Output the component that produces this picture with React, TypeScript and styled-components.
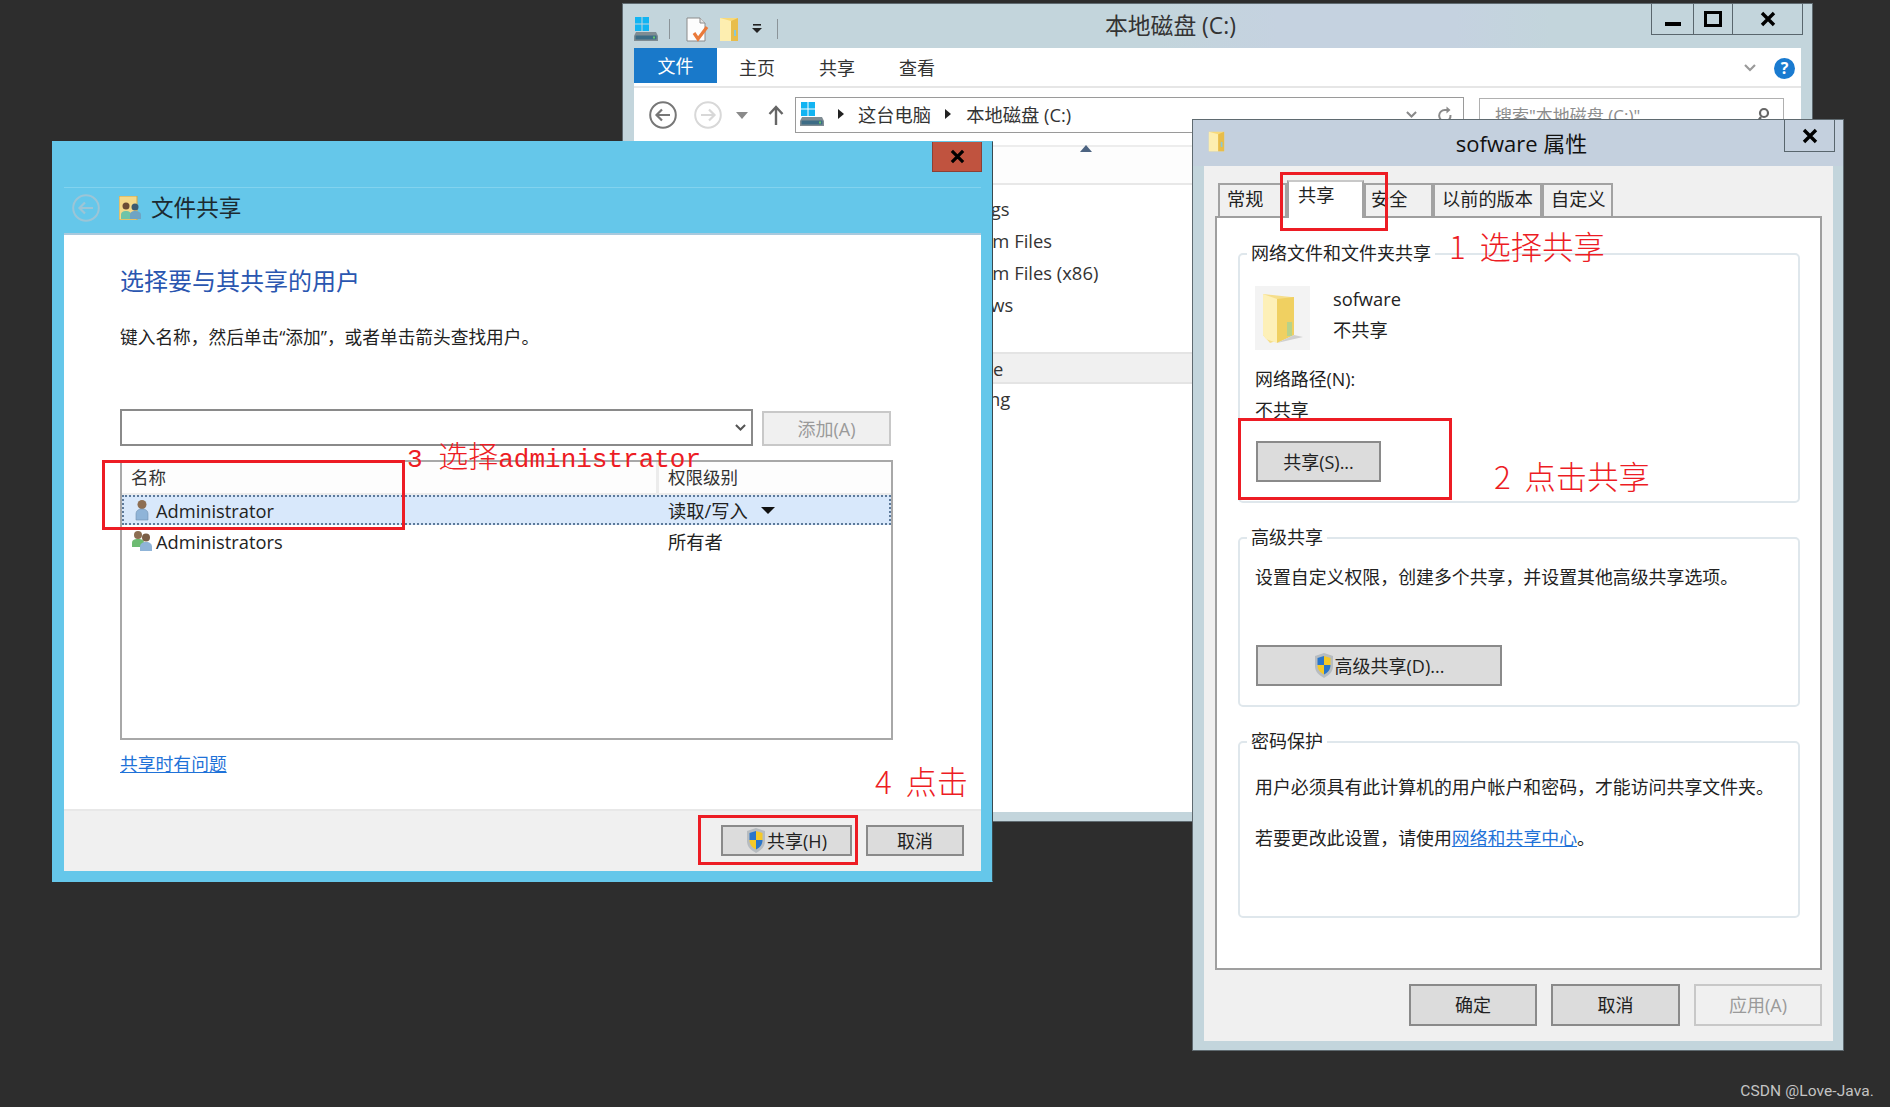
import React from "react";
import styled, { createGlobalStyle } from "styled-components";

const Global = createGlobalStyle`
  html, body { margin: 0; padding: 0; background: #2d2d2d; }
  * { box-sizing: border-box; }
  svg { flex: none; }
  body { font-family: "Open Sans", "Noto Sans CJK SC", sans-serif; color: #222; }
`;

const Desktop = styled.div`
  position: relative;
  width: 1890px;
  height: 1107px;
  background: #2d2d2d;
  overflow: hidden;
`;

const Watermark = styled.div`
  position: absolute;
  right: 16px;
  bottom: 6px;
  font-family: "Roboto", sans-serif;
  font-size: 15.5px;
  line-height: 20px;
  color: #c4c4c4;
  letter-spacing: 0.1px;
`;

const Frame = styled.section<{ $x: number; $y: number; $w: number; $h: number; $bg: string; $z: number }>`
  position: absolute;
  left: ${(p) => p.$x}px;
  top: ${(p) => p.$y}px;
  width: ${(p) => p.$w}px;
  height: ${(p) => p.$h}px;
  background: ${(p) => p.$bg};
  z-index: ${(p) => p.$z};
  border: 1px solid #5f6a70;
  display: flex;
  flex-direction: column;
`;
const ShareFrame = styled(Frame)`
  border-color: #65c7ea;
  border-right-color: #3a4a50;
  padding: 0 11px 10px;
`;

/* ---------- explorer ---------- */
const ExplorerTitleBar = styled.header`
  height: 44px;
  flex: none;
  display: flex;
  align-items: flex-start;
  padding: 0 9px 0 11px;
  background: linear-gradient(90deg, #c3d5dc 0 45%, #c5d2e0 55% 70%, #c3d5dc 78%);
`;
const Qat = styled.div`
  display: flex;
  align-items: center;
  height: 38px;
  margin-top: 6px;
  width: 144px;
  flex: none;
`;
const QatSep = styled.span<{ $ml: number }>`
  width: 1px;
  height: 20px;
  flex: none;
  background: #8b9499;
  margin-left: ${(p) => p.$ml}px;
`;
const QatSlot = styled.span<{ $ml: number }>`
  display: inline-flex;
  flex: none;
  margin-left: ${(p) => p.$ml}px;
`;
const ExplorerTitle = styled.h1`
  margin: 8px 0 0 327px;
  font-size: 22.8px;
  font-weight: 400;
  line-height: 28px;
  white-space: nowrap;
  color: #333;
`;
const CaptionGroup = styled.div`
  margin-left: auto;
  height: 31px;
  display: flex;
  border: 1px solid #59666d;
  border-top: none;
`;
const CaptionButton = styled.span<{ $w: number; $divider?: boolean }>`
  width: ${(p) => p.$w}px;
  display: flex;
  align-items: center;
  justify-content: center;
  border-left: ${(p) => (p.$divider ? "1px solid #59666d" : "none")};
`;

const ExplorerClient = styled.div`
  flex: 1;
  margin: 0 11px 9px;
  background: #fff;
  display: flex;
  flex-direction: column;
  min-height: 0;
`;
const Ribbon = styled.nav`
  height: 40px;
  flex: none;
  border-bottom: 2px solid #e6e6e6;
  display: flex;
  align-items: flex-start;
`;
const FileTab = styled.span`
  width: 83px;
  height: 35px;
  background: #1979ca;
  color: #fff;
  font-size: 18px;
  line-height: 36px;
  text-align: center;
`;
const RibbonTab = styled.span`
  width: 80px;
  height: 35px;
  font-size: 18px;
  line-height: 41px;
  text-align: center;
  color: #333;
`;
const RibbonRight = styled.span`
  margin-left: auto;
  display: flex;
  align-items: center;
  gap: 18px;
  height: 40px;
  padding-right: 6px;
`;
const HelpBadge = styled.span`
  width: 21px;
  height: 21px;
  border-radius: 50%;
  background: #1a7bd0;
  color: #fff;
  font-size: 16px;
  font-weight: 700;
  line-height: 21px;
  text-align: center;
`;
const NavRow = styled.div`
  height: 45px;
  flex: none;
  padding-top: 9px;
  display: flex;
  align-items: flex-start;
`;
const NavSlot = styled.span<{ $w: number; $ml: number }>`
  width: ${(p) => p.$w}px;
  height: 36px;
  margin-left: ${(p) => p.$ml}px;
  display: flex;
  align-items: center;
  justify-content: center;
`;
const AddressBar = styled.div`
  width: 669px;
  height: 36px;
  margin-left: 11px;
  border: 1.5px solid #9a9a9a;
  display: flex;
  align-items: center;
  padding: 0 0 2px 4px;
  font-size: 18.3px;
  color: #333;
`;
const Crumb = styled.span<{ $ml: number; $mr: number }>`
  white-space: nowrap;
  margin-left: ${(p) => p.$ml}px;
  margin-right: ${(p) => p.$mr}px;
`;
const CrumbArrow = styled.span<{ $ml?: number }>`
  width: 0;
  height: 0;
  flex: none;
  border-left: 6px solid #222;
  border-top: 5px solid transparent;
  border-bottom: 5px solid transparent;
  margin-left: ${(p) => p.$ml ?? 6}px;
`;
const AddressTools = styled.span`
  margin-left: auto;
  display: flex;
  align-items: center;
  gap: 20px;
  padding: 2px 10px 0 0;
`;
const SearchBox = styled.div`
  width: 305px;
  height: 36px;
  margin-left: 15px;
  margin-top: 1px;
  border: 1.5px solid #b0b0b0;
  display: flex;
  align-items: center;
  justify-content: space-between;
  padding: 0 13px 3px 15px;
  font-size: 17px;
  color: #8d8d8d;
`;
const FileHeader = styled.div`
  margin-top: 12px;
  height: 40px;
  flex: none;
  background: #fdfdfd;
  border-top: 2px solid #ededed;
  border-bottom: 2px solid #e8e8e8;
  display: flex;
  padding-left: 446px;
`;
const SortCaret = styled.span`
  width: 0;
  height: 0;
  margin-top: -2px;
  border-left: 6px solid transparent;
  border-right: 6px solid transparent;
  border-bottom: 7px solid #4d6482;
`;
const FileList = styled.ul`
  list-style: none;
  margin: 9px 0 0;
  padding: 0;
`;
const FileRow = styled.li<{ $selected?: boolean }>`
  height: 32px;
  line-height: 30px;
  padding-left: 301px;
  font-size: 18.4px;
  color: #333;
  background: ${(p) => (p.$selected ? "#f0f0f0" : "transparent")};
  border-top: ${(p) => (p.$selected ? "2px solid #e4e4e4" : "none")};
  border-bottom: ${(p) => (p.$selected ? "2px solid #e4e4e4" : "none")};
  margin-top: ${(p) => (p.$selected ? -2 : 0)}px;
`;

/* ---------- share dialog ---------- */
const ShareTop = styled.div`
  height: 45px;
  flex: none;
  display: flex;
  justify-content: flex-end;
  align-items: flex-start;
`;
const ShareClose = styled.span`
  width: 50px;
  height: 30px;
  margin-right: -1px;
  background: #c0533f;
  border: 1px solid #8c4036;
  border-top: none;
  display: flex;
  align-items: center;
  justify-content: center;
`;
const ShareHeader = styled.div`
  height: 48px;
  flex: none;
  border-top: 1px solid #82d3ef;
  border-bottom: 2px solid #a9c9dd;
  display: flex;
  align-items: center;
  padding: 0 0 6px 8px;
  gap: 9px;
`;
const ShareIconSlot = styled.span`
  display: inline-flex;
  margin-left: 10px;
`;
const ShareTitle = styled.h2`
  margin: 0;
  font-size: 22.6px;
  line-height: 28px;
  font-weight: 400;
  color: #1c2a30;
`;
const ShareBody = styled.div`
  flex: 1;
  background: #fff;
  padding: 29px 0 0 56px;
  display: flex;
  flex-direction: column;
  min-height: 0;
`;
const Heading = styled.h3`
  margin: 0;
  font-size: 24px;
  line-height: 34px;
  font-weight: 400;
  color: #2a56b0;
`;
const SubText = styled.p`
  margin: 26px 0 0;
  font-size: 17.7px;
  line-height: 26px;
  white-space: nowrap;
  color: #222;
`;
const ComboRow = styled.div`
  margin-top: 59px;
  display: flex;
  align-items: flex-end;
  gap: 9px;
`;
const Combo = styled.div`
  width: 633px;
  height: 37px;
  border: 2px solid #8a8a8a;
  display: flex;
  align-items: center;
  justify-content: flex-end;
  padding-right: 5px;
`;
const ListView = styled.div`
  margin-top: 14px;
  width: 773px;
  height: 280px;
  border: 2px solid #a8a8a8;
`;
const ListHeader = styled.div`
  height: 33px;
  display: grid;
  grid-template-columns: 537px 1fr;
  background: #fdfdfd;
  border-bottom: 2px solid #ececec;
  font-size: 17.5px;
  line-height: 30px;
`;
const HeaderCell = styled.span<{ $first?: boolean }>`
  padding-left: 9px;
  border-right: ${(p) => (p.$first ? "3px solid #ececec" : "none")};
  color: #333;
`;
const UserRow = styled.div<{ $selected?: boolean }>`
  height: 30px;
  display: grid;
  grid-template-columns: 537px 1fr;
  align-items: center;
  font-size: 18.3px;
  color: #222;
  background: ${(p) => (p.$selected ? "#d8e8fb" : "transparent")};
  outline: ${(p) => (p.$selected ? "2px dotted #5d7a9a" : "none")};
  outline-offset: -2px;
  margin-top: ${(p) => (p.$selected ? 0 : 1)}px;
`;
const UserName = styled.span`
  display: flex;
  align-items: center;
  padding-left: 6px;
`;
const UserIconSlot = styled.span`
  width: 28px;
  display: inline-flex;
  justify-content: center;
`;
const UserPerm = styled.span`
  display: flex;
  align-items: center;
  gap: 13px;
  padding-left: 9px;
`;
const MenuCaret = styled.span`
  width: 0;
  height: 0;
  border-top: 7px solid #111;
  border-left: 7px solid transparent;
  border-right: 7px solid transparent;
`;
const HelpLink = styled.a`
  margin-top: 12px;
  font-size: 17.8px;
  line-height: 24px;
  color: #1f72d8;
  text-decoration: underline;
  align-self: flex-start;
`;
const ShareFooter = styled.footer`
  height: 62px;
  flex: none;
  background: #f0f0f0;
  border-top: 2px solid #e8e8e8;
  padding: 14px 17px 0 0;
  display: flex;
  justify-content: flex-end;
  align-items: flex-start;
  gap: 14px;
`;

/* ---------- shared buttons ---------- */
const Button = styled.button<{ $w: number; $h: number; $disabled?: boolean }>`
  width: ${(p) => p.$w}px;
  height: ${(p) => p.$h}px;
  padding: 0;
  background: ${(p) => (p.$disabled ? "#f0f0f0" : "#dcdcdc")};
  border: 2px solid ${(p) => (p.$disabled ? "#c8c8c8" : "#8a8a8a")};
  color: ${(p) => (p.$disabled ? "#9a9a9a" : "#222")};
  font-family: inherit;
  font-size: 18px;
  line-height: 22px;
  display: inline-flex;
  align-items: center;
  justify-content: center;
  gap: 1px;
`;

/* ---------- properties ---------- */
const PropsTitleBar = styled.header`
  height: 46px;
  flex: none;
  display: grid;
  grid-template-columns: 1fr auto 1fr;
  margin: 0 -10px 0 -11px;
  padding: 0 8px 0 15px;
  background: #c4d0de;
`;
const PropsIconCell = styled.span`
  padding-top: 10px;
`;
const PropsTitle = styled.h2`
  margin: 10px 0 0;
  font-size: 22px;
  font-weight: 400;
  line-height: 27px;
  color: #111;
`;
const PropsClose = styled.span`
  justify-self: end;
  width: 51px;
  height: 32px;
  border: 1px solid #59666d;
  border-top: none;
  display: flex;
  align-items: center;
  justify-content: center;
`;
const PropsClient = styled.div`
  flex: 1;
  background: #f0f0f0;
  display: flex;
  flex-direction: column;
  padding: 0 11px;
  min-height: 0;
`;
const PropsWrap = styled.div`
  flex: 1;
  padding: 0 10px 9px 11px;
  display: flex;
  flex-direction: column;
  min-height: 0;
  background: #c3d5dc;
`;
const TabStrip = styled.div`
  height: 50px;
  flex: none;
  display: flex;
  align-items: flex-end;
  padding-left: 3px;
`;
const Tab = styled.span<{ $w: number; $pl: number; $active?: boolean }>`
  width: ${(p) => p.$w}px;
  height: ${(p) => (p.$active ? 38 : 33)}px;
  background: ${(p) => (p.$active ? "#fff" : "#f0f0f0")};
  border: 2px solid #a2a2a2;
  border-bottom: none;
  border-top-color: ${(p) => (p.$active ? "#c8c8c8" : "#a2a2a2")};
  font-size: 18.2px;
  line-height: ${(p) => (p.$active ? 27 : 29)}px;
  padding-left: ${(p) => p.$pl}px;
  color: #222;
  margin-bottom: ${(p) => (p.$active ? -2 : 0)}px;
  position: relative;
  z-index: ${(p) => (p.$active ? 1 : 0)};
  white-space: nowrap;
`;
const TabPanel = styled.div`
  height: 754px;
  flex: none;
  background: #fff;
  border: 2px solid #9f9f9f;
  padding: 35px 20px 0 21px;
  display: flex;
  flex-direction: column;
  gap: 34px;
`;
const Group = styled.div<{ $h: number }>`
  height: ${(p) => p.$h}px;
  flex: none;
  border: 2px solid #dfe7ec;
  border-radius: 5px;
  padding-left: 15px;
`;
const Legend = styled.span`
  display: block;
  width: fit-content;
  margin: -13px 0 0 -8px;
  padding: 0 4px;
  background: #fff;
  font-size: 18px;
  line-height: 22px;
  color: #222;
`;
const FolderRow = styled.div`
  margin-top: 22px;
  height: 64px;
  display: flex;
  gap: 23px;
`;
const FolderTile = styled.span`
  width: 55px;
  background: #f3f3f3;
  display: flex;
  align-items: center;
  justify-content: center;
`;
const FolderInfo = styled.div`
  display: flex;
  flex-direction: column;
  gap: 9px;
  padding-top: 2px;
  font-size: 18.3px;
  line-height: 22px;
`;
const PlainLine = styled.p<{ $mt: number }>`
  margin: ${(p) => p.$mt}px 0 0;
  font-size: 17.9px;
  line-height: 22px;
  white-space: nowrap;
  color: #222;
`;
const ButtonLine = styled.div<{ $mt: number }>`
  margin: ${(p) => p.$mt}px 0 0 1px;
`;
const InlineLink = styled.a`
  color: #1f72d8;
  text-decoration: underline;
`;
const PropsFooter = styled.footer`
  flex: 1;
  display: flex;
  justify-content: flex-end;
  gap: 14px;
  padding-top: 14px;
`;

/* ---------- annotations ---------- */
const RedBox = styled.div<{ $x: number; $y: number; $w: number; $h: number }>`
  position: absolute;
  z-index: 10;
  left: ${(p) => p.$x}px;
  top: ${(p) => p.$y}px;
  width: ${(p) => p.$w}px;
  height: ${(p) => p.$h}px;
  border: 3px solid #ed1c24;
`;
const Note = styled.div<{ $x: number; $y: number }>`
  position: absolute;
  z-index: 11;
  left: ${(p) => p.$x}px;
  top: ${(p) => p.$y}px;
  color: #ed1c24;
  font-family: "Noto Sans CJK SC", sans-serif;
  font-weight: 300;
  font-size: 31.3px;
  line-height: 40px;
  white-space: pre;
`;
const NoteMono = styled(Note)`
  font-family: "Liberation Mono", "Noto Sans CJK SC", monospace;
  font-size: 26px;
  font-weight: 400;
`;
const NoteCjk = styled.span`
  font-family: "Noto Sans CJK SC", sans-serif;
  font-weight: 300;
  font-size: 30px;
`;

/* ---------- drawings ---------- */
const DriveIcon = () => (
  <svg width="24" height="25" viewBox="0 0 24 25">
    <rect x="1" y="0" width="6.5" height="6.5" fill="#12b4f2" />
    <rect x="8.5" y="0" width="6.5" height="6.5" fill="#12b4f2" />
    <rect x="1" y="7.5" width="6.5" height="6.5" fill="#12b4f2" />
    <rect x="8.5" y="7.5" width="6.5" height="6.5" fill="#12b4f2" />
    <path d="M2 15h20l2 4v5H0v-5z" fill="#7f8c93" />
    <rect x="1.5" y="18.5" width="21" height="4" fill="#3d6c86" />
    <rect x="19" y="19.5" width="2" height="2" fill="#65c76a" />
  </svg>
);
const NoteIcon = () => (
  <svg width="24" height="25" viewBox="0 0 24 25">
    <path d="M1 1h13l5 5v18H1z" fill="#fdfdfd" stroke="#8b8b8b" />
    <path d="M14 1v5h5" fill="#e5e5e5" stroke="#8b8b8b" />
    <path d="M8 16l4 6 9-12" fill="none" stroke="#ea7a3a" strokeWidth="3.2" />
  </svg>
);
const SmallFolder = ({ w = 20, h = 25 }: { w?: number; h?: number }) => (
  <svg width={w} height={h} viewBox="0 0 20 25">
    <path d="M1 1h18v23H1z" fill="#f8d979" />
    <path d="M1 1l11 3v20H1z" fill="#fdeeb0" />
    <path d="M12 4l7-3v23h-7z" fill="#e8bd4b" />
    <rect x="15" y="13" width="2" height="6" fill="#87c8d8" />
  </svg>
);
const QatDrop = () => (
  <svg width="10" height="10" viewBox="0 0 10 10">
    <rect x="1" y="0" width="8" height="1.6" fill="#222" />
    <path d="M0 4h10L5 9z" fill="#222" />
  </svg>
);
const MinGlyph = () => (
  <svg width="16" height="16" viewBox="0 0 16 16">
    <rect x="0" y="11" width="16" height="4" fill="#000" />
  </svg>
);
const MaxGlyph = () => (
  <svg width="18" height="16" viewBox="0 0 18 16">
    <rect x="1.5" y="1.5" width="15" height="13" fill="none" stroke="#000" strokeWidth="3" />
  </svg>
);
const CloseGlyph = ({ s = 16, c = "#000" }: { s?: number; c?: string }) => (
  <svg width={s} height={s} viewBox="0 0 16 16">
    <path d="M2 2l12 12M14 2L2 14" stroke={c} strokeWidth="3.4" />
  </svg>
);
const BackCircle = ({ c, s = 28 }: { c: string; s?: number }) => (
  <svg width={s} height={s} viewBox="0 0 28 28">
    <circle cx="14" cy="14" r="12.8" fill="none" stroke={c} strokeWidth="2" />
    <path d="M21 14H8M13 8.5L7.5 14l5.5 5.5" fill="none" stroke={c} strokeWidth="2.2" />
  </svg>
);
const ForwardCircle = ({ c }: { c: string }) => (
  <svg width="28" height="28" viewBox="0 0 28 28">
    <circle cx="14" cy="14" r="12.8" fill="none" stroke={c} strokeWidth="2" />
    <path d="M7 14h13M15 8.5l5.5 5.5-5.5 5.5" fill="none" stroke={c} strokeWidth="2.2" />
  </svg>
);
const DownTri = () => (
  <svg width="12" height="7" viewBox="0 0 12 7">
    <path d="M0 0h12L6 7z" fill="#8a8a8a" />
  </svg>
);
const UpArrow = () => (
  <svg width="16" height="20" viewBox="0 0 16 20">
    <path d="M8 20V3M1.5 9L8 2l6.5 7" fill="none" stroke="#666" strokeWidth="2.4" />
  </svg>
);
const Chevron = ({ c = "#8a8a8a", w = 12 }: { c?: string; w?: number }) => (
  <svg width={w} height={(w * 8) / 12} viewBox="0 0 12 8">
    <path d="M1 1l5 5 5-5" fill="none" stroke={c} strokeWidth="2.2" />
  </svg>
);
const Refresh = () => (
  <svg width="16" height="18" viewBox="0 0 16 18">
    <path d="M13.5 9A5.7 5.7 0 1 1 8 4h3" fill="none" stroke="#8a8a8a" strokeWidth="2" />
    <path d="M9.5 0.5L13.5 4l-4 3.5z" fill="#8a8a8a" />
  </svg>
);
const Lens = () => (
  <svg width="14" height="16" viewBox="0 0 14 16">
    <circle cx="8" cy="6" r="4" fill="none" stroke="#666" strokeWidth="2.2" />
    <path d="M5 10l-3 4" stroke="#666" strokeWidth="2.4" />
  </svg>
);
const Shield = () => (
  <svg width="20" height="25" viewBox="0 0 20 25">
    <path d="M10 0l9 3v10c0 6-4 9-9 12-5-3-9-6-9-12V3z" fill="#b7bcc0" />
    <path d="M10 3v9H3.5V5z" fill="#2a75c9" />
    <path d="M10 3l6.5 2v7H10z" fill="#f5c927" />
    <path d="M3.5 12H10v9.5c-3.5-2-6.5-4.5-6.5-9.5z" fill="#f5c927" />
    <path d="M10 12h6.5c0 5-3 7.5-6.5 9.5z" fill="#2a75c9" />
  </svg>
);
const UserIcon = () => (
  <svg width="18" height="22" viewBox="0 0 18 22">
    <circle cx="9" cy="5.5" r="4.5" fill="#8d6e52" />
    <path d="M3 21v-6c0-3 2-5 6-5s6 2 6 5v6z" fill="#8fb4d8" stroke="#6f8fae" strokeWidth=".6" />
  </svg>
);
const UsersIcon = () => (
  <svg width="22" height="22" viewBox="0 0 22 22">
    <circle cx="7" cy="5" r="4" fill="#8d6e52" />
    <path d="M1 17v-4c0-3 2-4 6-4s6 1 6 4v4z" fill="#6dbb72" />
    <circle cx="15" cy="7.5" r="4" fill="#7a5e46" />
    <path d="M9 21v-4c0-3 2-5 6-5s6 2 6 5v4z" fill="#8fb4d8" />
  </svg>
);
const ShareUsersIcon = () => (
  <svg width="23" height="24" viewBox="0 0 23 24">
    <path d="M0 0h18v24H0z" fill="#f4d98a" stroke="#cfa84a" />
    <circle cx="7" cy="10" r="3.5" fill="#6b4d35" />
    <path d="M2 23v-4c0-3 2-4 5-4s5 1 5 4v4z" fill="#6fc4a8" />
    <circle cx="16" cy="11" r="3.5" fill="#3d5a70" />
    <path d="M11 23v-4c0-3 2-4 5-4s6 1 6 4v4z" fill="#6fa4c4" />
  </svg>
);
const BigFolder = () => (
  <svg width="42" height="54" viewBox="0 0 42 54">
    <path d="M1 3l28 3 3 0v38L8 52 1 44z" fill="#f6de8a" />
    <path d="M1 3l14 5v44L4 48 1 44z" fill="#fdf0b8" />
    <path d="M15 8l17-2v38L15 52z" fill="#f0d061" />
    <rect x="25" y="31" width="5" height="14" fill="#b7d28a" />
    <path d="M32 44l9 2-26 6z" fill="#cfcfcf" />
  </svg>
);

export default function App() {
  return (
    <>
      <Global />
      <Desktop>
        <Frame $x={622} $y={3} $w={1191} $h={819} $bg="#c3d5dc" $z={1}>
          <ExplorerTitleBar>
            <Qat>
              <DriveIcon />
              <QatSep $ml={11} />
              <QatSlot $ml={16}><NoteIcon /></QatSlot>
              <QatSlot $ml={9}><SmallFolder /></QatSlot>
              <QatSlot $ml={13}><QatDrop /></QatSlot>
              <QatSep $ml={15} />
            </Qat>
            <ExplorerTitle>本地磁盘 (C:)</ExplorerTitle>
            <CaptionGroup>
              <CaptionButton $w={41}><MinGlyph /></CaptionButton>
              <CaptionButton $w={39} $divider><MaxGlyph /></CaptionButton>
              <CaptionButton $w={70} $divider><CloseGlyph /></CaptionButton>
            </CaptionGroup>
          </ExplorerTitleBar>
          <ExplorerClient>
            <Ribbon>
              <FileTab>文件</FileTab>
              <RibbonTab>主页</RibbonTab>
              <RibbonTab>共享</RibbonTab>
              <RibbonTab>查看</RibbonTab>
              <RibbonRight>
                <Chevron c="#9a9a9a" w={12} />
                <HelpBadge>?</HelpBadge>
              </RibbonRight>
            </Ribbon>
            <NavRow>
              <NavSlot $w={28} $ml={15}><BackCircle c="#777" /></NavSlot>
              <NavSlot $w={28} $ml={17}><ForwardCircle c="#d8d8d8" /></NavSlot>
              <NavSlot $w={12} $ml={14}><DownTri /></NavSlot>
              <NavSlot $w={16} $ml={20}><UpArrow /></NavSlot>
              <AddressBar>
                <DriveIcon />
                <CrumbArrow $ml={14} />
                <Crumb $ml={14} $mr={14}>这台电脑</Crumb>
                <CrumbArrow $ml={0} />
                <Crumb $ml={15} $mr={12}>本地磁盘 (C:)</Crumb>
                <AddressTools>
                  <Chevron w={11} />
                  <Refresh />
                </AddressTools>
              </AddressBar>
              <SearchBox>
                <span>搜索"本地磁盘 (C:)"</span>
                <Lens />
              </SearchBox>
            </NavRow>
            <FileHeader>
              <SortCaret />
            </FileHeader>
            <FileList>
              <FileRow>PerfLogs</FileRow>
              <FileRow>Program Files</FileRow>
              <FileRow>Program Files (x86)</FileRow>
              <FileRow>Windows</FileRow>
              <FileRow aria-hidden />
              <FileRow $selected>sofware</FileRow>
              <FileRow>Mapping</FileRow>
            </FileList>
          </ExplorerClient>
        </Frame>

        <ShareFrame $x={52} $y={141} $w={941} $h={741} $bg="#65c7ea" $z={2}>
          <ShareTop>
            <ShareClose><CloseGlyph s={15} /></ShareClose>
          </ShareTop>
          <ShareHeader>
            <BackCircle c="#9cc5d6" />
            <ShareIconSlot><ShareUsersIcon /></ShareIconSlot>
            <ShareTitle>文件共享</ShareTitle>
          </ShareHeader>
          <ShareBody>
            <Heading>选择要与其共享的用户</Heading>
            <SubText>键入名称，然后单击“添加”，或者单击箭头查找用户。</SubText>
            <ComboRow>
              <Combo><Chevron c="#555" w={11} /></Combo>
              <Button $w={129} $h={35} $disabled>添加(A)</Button>
            </ComboRow>
            <ListView>
              <ListHeader>
                <HeaderCell $first>名称</HeaderCell>
                <HeaderCell>权限级别</HeaderCell>
              </ListHeader>
              <UserRow $selected>
                <UserName><UserIconSlot><UserIcon /></UserIconSlot>Administrator</UserName>
                <UserPerm>读取/写入<MenuCaret /></UserPerm>
              </UserRow>
              <UserRow>
                <UserName><UserIconSlot><UsersIcon /></UserIconSlot>Administrators</UserName>
                <UserPerm>所有者</UserPerm>
              </UserRow>
            </ListView>
            <HelpLink>共享时有问题</HelpLink>
          </ShareBody>
          <ShareFooter>
            <Button $w={131} $h={31}><Shield />共享(H)</Button>
            <Button $w={98} $h={31}>取消</Button>
          </ShareFooter>
        </ShareFrame>

        <Frame $x={1192} $y={119} $w={652} $h={932} $bg="#c3d5dc" $z={3}>
          <PropsWrap>
            <PropsTitleBar>
              <PropsIconCell><SmallFolder w={17} h={23} /></PropsIconCell>
              <PropsTitle>sofware 属性</PropsTitle>
              <PropsClose><CloseGlyph /></PropsClose>
            </PropsTitleBar>
            <PropsClient>
              <TabStrip>
                <Tab $w={69} $pl={7}>常规</Tab>
                <Tab $w={77} $pl={9} $active>共享</Tab>
                <Tab $w={69} $pl={5}>安全</Tab>
                <Tab $w={109} $pl={7}>以前的版本</Tab>
                <Tab $w={71} $pl={7}>自定义</Tab>
              </TabStrip>
              <TabPanel>
                <Group $h={250}>
                  <Legend>网络文件和文件夹共享</Legend>
                  <FolderRow>
                    <FolderTile><BigFolder /></FolderTile>
                    <FolderInfo>
                      <span>sofware</span>
                      <span>不共享</span>
                    </FolderInfo>
                  </FolderRow>
                  <PlainLine $mt={18}>网络路径(N):</PlainLine>
                  <PlainLine $mt={9}>不共享</PlainLine>
                  <ButtonLine $mt={20}>
                    <Button $w={125} $h={41}>共享(S)...</Button>
                  </ButtonLine>
                </Group>
                <Group $h={170}>
                  <Legend>高级共享</Legend>
                  <PlainLine $mt={18}>设置自定义权限，创建多个共享，并设置其他高级共享选项。</PlainLine>
                  <ButtonLine $mt={57}>
                    <Button $w={246} $h={41}><Shield />高级共享(D)...</Button>
                  </ButtonLine>
                </Group>
                <Group $h={177}>
                  <Legend>密码保护</Legend>
                  <PlainLine $mt={24}>用户必须具有此计算机的用户帐户和密码，才能访问共享文件夹。</PlainLine>
                  <PlainLine $mt={29}>若要更改此设置，请使用<InlineLink>网络和共享中心</InlineLink>。</PlainLine>
                </Group>
              </TabPanel>
              <PropsFooter>
                <Button $w={128} $h={42}>确定</Button>
                <Button $w={129} $h={42}>取消</Button>
                <Button $w={128} $h={42} $disabled>应用(A)</Button>
              </PropsFooter>
            </PropsClient>
          </PropsWrap>
        </Frame>

        <RedBox $x={1280} $y={172} $w={108} $h={59} />
        <RedBox $x={1238} $y={418} $w={214} $h={82} />
        <RedBox $x={102} $y={460} $w={303} $h={70} />
        <RedBox $x={698} $y={815} $w={160} $h={50} />

        <Note $x={1449} $y={226}>1  选择共享</Note>
        <Note $x={1494} $y={456}>2  点击共享</Note>
        <NoteMono $x={407} $y={434}>3 <NoteCjk>选择</NoteCjk>administrator</NoteMono>
        <Note $x={875} $y={761}>4  点击</Note>

        <Watermark>CSDN @Love-Java.</Watermark>
      </Desktop>
    </>
  );
}
